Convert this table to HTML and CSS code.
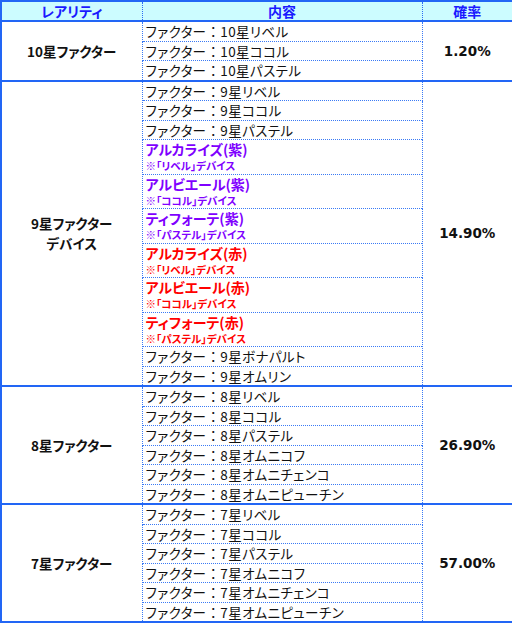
FILE: index.html
```html
<!DOCTYPE html>
<html lang="ja">
<head>
<meta charset="utf-8">
<link rel="stylesheet" href="styles.css">
</head>
<body>
<table class="gacha">
  <colgroup>
    <col class="c-rarity">
    <col class="c-content">
    <col class="c-rate">
  </colgroup>
  <thead>
    <tr>
      <th>レアリティ</th>
      <th>内容</th>
      <th>確率</th>
    </tr>
  </thead>
  <tbody>
    <tr><td class="rarity" rowspan="3">10星ファクター</td><td class="item">ファクター<span class="colon">：</span>10星リベル</td><td class="rate" rowspan="3">1.20%</td></tr>
    <tr><td class="item">ファクター<span class="colon">：</span>10星ココル</td></tr>
    <tr><td class="item">ファクター<span class="colon">：</span>10星パステル</td></tr>
  </tbody>
  <tbody>
    <tr><td class="rarity" rowspan="11">9星ファクター<br>デバイス</td><td class="item">ファクター<span class="colon">：</span>9星リベル</td><td class="rate" rowspan="11">14.90%</td></tr>
    <tr><td class="item">ファクター<span class="colon">：</span>9星ココル</td></tr>
    <tr><td class="item">ファクター<span class="colon">：</span>9星パステル</td></tr>
    <tr><td class="dev purple"><div class="dev-name">アルカライズ(紫)</div><div class="dev-note">※「リベル」デバイス</div></td></tr>
    <tr><td class="dev purple"><div class="dev-name">アルビエール(紫)</div><div class="dev-note">※「ココル」デバイス</div></td></tr>
    <tr><td class="dev purple"><div class="dev-name">ティフォーテ(紫)</div><div class="dev-note">※「パステル」デバイス</div></td></tr>
    <tr><td class="dev red"><div class="dev-name">アルカライズ(赤)</div><div class="dev-note">※「リベル」デバイス</div></td></tr>
    <tr><td class="dev red"><div class="dev-name">アルビエール(赤)</div><div class="dev-note">※「ココル」デバイス</div></td></tr>
    <tr><td class="dev red"><div class="dev-name">ティフォーテ(赤)</div><div class="dev-note">※「パステル」デバイス</div></td></tr>
    <tr><td class="item">ファクター<span class="colon">：</span>9星ボナパルト</td></tr>
    <tr><td class="item">ファクター<span class="colon">：</span>9星オムリン</td></tr>
  </tbody>
  <tbody>
    <tr><td class="rarity" rowspan="6">8星ファクター</td><td class="item">ファクター<span class="colon">：</span>8星リベル</td><td class="rate" rowspan="6">26.90%</td></tr>
    <tr><td class="item">ファクター<span class="colon">：</span>8星ココル</td></tr>
    <tr><td class="item">ファクター<span class="colon">：</span>8星パステル</td></tr>
    <tr><td class="item">ファクター<span class="colon">：</span>8星オムニコフ</td></tr>
    <tr><td class="item">ファクター<span class="colon">：</span>8星オムニチェンコ</td></tr>
    <tr><td class="item">ファクター<span class="colon">：</span>8星オムニピューチン</td></tr>
  </tbody>
  <tbody>
    <tr><td class="rarity" rowspan="6">7星ファクター</td><td class="item">ファクター<span class="colon">：</span>7星リベル</td><td class="rate" rowspan="6">57.00%</td></tr>
    <tr><td class="item">ファクター<span class="colon">：</span>7星ココル</td></tr>
    <tr><td class="item">ファクター<span class="colon">：</span>7星パステル</td></tr>
    <tr><td class="item">ファクター<span class="colon">：</span>7星オムニコフ</td></tr>
    <tr><td class="item">ファクター<span class="colon">：</span>7星オムニチェンコ</td></tr>
    <tr><td class="item">ファクター<span class="colon">：</span>7星オムニピューチン</td></tr>
  </tbody>
</table>
</body>
</html>
```

FILE: styles.css
```css
html, body {
  margin: 0;
  padding: 0;
  background: #ffffff;
}

.gacha {
  width: 512px;
  border-collapse: collapse;
  table-layout: fixed;
  border: 2px solid #2266f5;
  font-family: "Noto Sans CJK JP", "DejaVu Sans", sans-serif;
  font-size: 13px;
  color: #111111;
}

.c-rarity { width: 141px; }
.c-content { width: 280px; }
.c-rate { width: 91px; }

.gacha th {
  background: #ccfcff;
  color: #1a1aff;
  font-weight: bold;
  font-size: 14px;
  height: 18px;
  padding: 0;
  line-height: 18px;
  text-align: center;
  font-feature-settings: "palt";
  border-bottom: 2px solid #2266f5;
  border-left: 1px dotted #2a6cf5;
  border-right: 1px dotted #2a6cf5;
}

.gacha tbody {
  border-top: 2px solid #2266f5;
}

.gacha td {
  padding: 0;
  border: 1px dotted #3a7af5;
}

.rarity {
  text-align: center;
  vertical-align: middle;
  font-weight: bold;
  font-size: 13.5px;
  line-height: 20px;
  font-feature-settings: "palt";
}

.rate {
  text-align: center;
  vertical-align: middle;
  font-family: "DejaVu Sans", sans-serif;
  font-weight: bold;
  font-size: 13.5px;
}

.item {
  height: 18.5px;
  line-height: 18.5px;
  padding-left: 3px !important;
  font-size: 13.5px;
  letter-spacing: 0.4px;
  font-feature-settings: "palt";
  white-space: nowrap;
}

.colon {
  font-feature-settings: normal;
}

.dev {
  height: 33.5px;
  padding-left: 3px !important;
  font-weight: bold;
  font-feature-settings: "palt";
  white-space: nowrap;
  vertical-align: top;
}

.dev-name {
  font-size: 14px;
  line-height: 19px;
}

.dev-note {
  font-size: 10.5px;
  line-height: 14px;
}

.purple { color: #7f00ff; }
.red { color: #ff0000; }
```
